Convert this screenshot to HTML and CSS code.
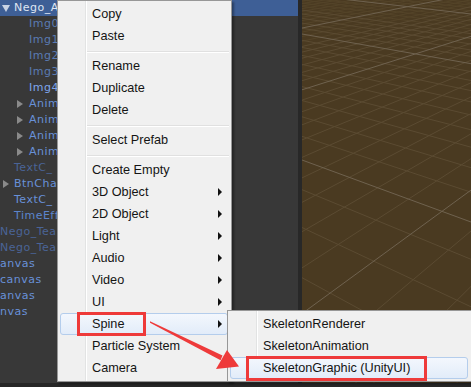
FILE: index.html
```html
<!DOCTYPE html>
<html lang="en">
<head>
  <meta charset="UTF-8" />
  <title>Hierarchy context menu</title>
  <link rel="stylesheet" href="styles.css">
</head>
<body>
  <div class="editor">
    <!-- hierarchy panel, names cut where the menu covers them -->
    <div class="hierarchy">
      <div class="row l1 selected"><span class="fold"><svg width="8" height="7" viewBox="0 0 8 7"><path d="M0 0H8L4 7Z" fill="#c9d3e4"/></svg></span>Nego_A</div>
      <div class="row l2 muted"><span class="fold"></span>Img0</div>
      <div class="row l2 muted"><span class="fold"></span>Img1</div>
      <div class="row l2 muted"><span class="fold"></span>Img2</div>
      <div class="row l2 muted"><span class="fold"></span>Img3</div>
      <div class="row l2 bright"><span class="fold"></span>Img4</div>
      <div class="row l2 active"><span class="fold"><svg width="6" height="8" viewBox="0 0 6 8"><path d="M0 0L6 4L0 8Z" fill="#8a8a8a"/></svg></span>Anim</div>
      <div class="row l2 active"><span class="fold"><svg width="6" height="8" viewBox="0 0 6 8"><path d="M0 0L6 4L0 8Z" fill="#8a8a8a"/></svg></span>Anim</div>
      <div class="row l2 active"><span class="fold"><svg width="6" height="8" viewBox="0 0 6 8"><path d="M0 0L6 4L0 8Z" fill="#8a8a8a"/></svg></span>Anim</div>
      <div class="row l2 active"><span class="fold"><svg width="6" height="8" viewBox="0 0 6 8"><path d="M0 0L6 4L0 8Z" fill="#8a8a8a"/></svg></span>Anim</div>
      <div class="row l1 dim"><span class="fold"></span>TextC_</div>
      <div class="row l1 active"><span class="fold"><svg width="6" height="8" viewBox="0 0 6 8"><path d="M0 0L6 4L0 8Z" fill="#8a8a8a"/></svg></span>BtnCha</div>
      <div class="row l1 active"><span class="fold"></span>TextC_</div>
      <div class="row l1 mid"><span class="fold"></span>TimeEff</div>
      <div class="row l0 dim">Nego_Tea</div>
      <div class="row l0 dim">Nego_Tea</div>
      <div class="row l0 active">anvas</div>
      <div class="row l0 active">canvas</div>
      <div class="row l0 active">anvas</div>
      <div class="row l0 active">nvas</div>
    </div>
    <div class="divider"></div>
    <!-- scene view with ground grid -->
    <div class="scene">
      <svg class="grid" width="169" height="383" viewBox="0 0 169 383">
        <path class="grid-far" d="M0 -16.7L169 0M0 -14.8L169 2.4M0 -12.7L169 5M0 -10.5L169 7.8M0 -8.1L169 10.8M0 -2.9L169 17.4M0 0L169 21M0 3.1L169 24.9M0 6.4L169 29M0 1.2L169 -24.5M0 3.5L169 -23M0 6L169 -21.2M0 8.6L169 -19.4M0 11.3L169 -17.6M0 14.2L169 -15.6M0 17.3L169 -13.5M0 20.6L169 -11.2M0 24.2L169 -8.7M0 32.1L169 -3.3M0 36.5L169 -0.3M0 41.3L169 3"/>
        <path class="grid-dim" d="M0 10.1L169 33.7M0 14L169 38.6M0 18.3L169 44M0 23.1L169 50M0 28.2L169 56.4M0 40.3L169 71.6M0 47.4L169 80.5M0 55.4L169 90.6M0 64.4L169 101.9M0 74.8L169 115M0 86.6L169 129.8M0 100.5L169 147.2M0 116.8L169 167.7M0 136.3L169 192.2M0 189.7L169 259.3M0 227.5L169 306.8M0 277.7L169 369.8M0 347.3L169 457.2M0 46.5L169 6.6M0 52.1L169 10.4M0 58.2L169 14.6M0 65L169 19.3M0 72.4L169 24.4M0 80.7L169 30.1M0 100.1L169 43.4M0 111.7L169 51.4M0 124.8L169 60.4M0 139.9L169 70.8M0 157.4L169 82.8M0 177.9L169 96.9M0 202.3L169 113.6M0 231.7L169 133.8M0 267.9L169 158.7M0 373.1L169 231M0 453.8L169 286.4M0 569.2L169 365.7"/>
        <path class="grid-main" d="M0 -5.6L169 14M0 34L169 63.7M0 160L169 222M0 28L169 -6.1M0 89.8L169 36.3M0 313.6L169 190.1"/>
      </svg>
    </div>
  </div>
  <div class="statusbar"></div>

  <!-- context menu -->
  <div class="menu">
    <div class="item">Copy</div>
    <div class="item">Paste</div>
    <div class="sep"></div>
    <div class="item">Rename</div>
    <div class="item">Duplicate</div>
    <div class="item">Delete</div>
    <div class="sep"></div>
    <div class="item">Select Prefab</div>
    <div class="sep"></div>
    <div class="item">Create Empty</div>
    <div class="item">3D Object<span class="arrow"></span></div>
    <div class="item">2D Object<span class="arrow"></span></div>
    <div class="item">Light<span class="arrow"></span></div>
    <div class="item">Audio<span class="arrow"></span></div>
    <div class="item">Video<span class="arrow"></span></div>
    <div class="item">UI<span class="arrow"></span></div>
    <div class="item hover">Spine<span class="arrow"></span></div>
    <div class="item">Particle System</div>
    <div class="item">Camera</div>
  </div>

  <div class="menu submenu">
    <div class="item">SkeletonRenderer</div>
    <div class="item">SkeletonAnimation</div>
    <div class="item hover">SkeletonGraphic (UnityUI)</div>
  </div>

  <!-- annotations -->
  <div class="mark mark-spine"></div>
  <div class="mark mark-graphic"></div>
  <svg class="pointer" width="471" height="387" viewBox="0 0 471 387">
    <path d="M150 321.3L222.5 355.6L220.6 360.2L150 322.8Z" fill="#ee3a3a"/>
    <path d="M239 366.5L216 369L227 350Z" fill="#ee3a3a"/>
  </svg>
</body>
</html>
```

FILE: styles.css
```css
:root {
  --panel: #383838;
  --select: #3e5f96;
  --menu-bg: #f0f0f0;
  --menu-border: #979797;
  --red: #ee3a3a;
}

body {
  margin: 0;
  width: 471px;
  height: 387px;
  overflow: hidden;
  background: #262626;
  position: relative;
}

.editor {
  display: flex;
  height: 383px;
}

.statusbar {
  height: 4px;
  background: #262626;
}

/* hierarchy */
.hierarchy {
  width: 298px;
  background: var(--panel);
  font-family: "DejaVu Sans", sans-serif;
  font-size: 11px;
  letter-spacing: 0.5px;
  overflow: hidden;
}

.row {
  height: 16px;
  line-height: 16px;
  white-space: nowrap;
  display: flex;
  align-items: center;
}

.row.l0 { padding-left: 0; }
.row.l1 { padding-left: 0; }
.row.l2 { padding-left: 15px; }

.fold {
  width: 14px;
  height: 16px;
  display: inline-flex;
  align-items: center;
  padding-left: 2px;
  box-sizing: border-box;
  flex: none;
}

.row.l1 .fold { padding-left: 3px; }
.row.l2 .fold { padding-left: 2px; }
.row.selected .fold { padding-left: 2px; }

.selected {
  background: var(--select);
  color: #dfe6f2;
}

.muted { color: #5a7bb3; }
.bright { color: #7ea6ec; }
.active { color: #6891d8; }
.mid { color: #5c85cc; }
.dim { color: #4a6497; }

.divider {
  width: 4px;
  background: #282828;
}

.scene {
  flex: 1;
  background: #4a3a21;
  overflow: hidden;
}

.grid {
  display: block;
}

.grid path {
  fill: none;
  stroke-width: 1;
}

.grid-far { stroke: #544429; }
.grid-dim { stroke: #5b4b32; }
.grid-main { stroke: #6f624f; }

/* context menu */
.menu {
  position: absolute;
  left: 57px;
  top: 0;
  width: 175px;
  box-sizing: border-box;
  border: 1px solid var(--menu-border);
  padding: 2px 3px 2px 2px;
  background: linear-gradient(to right,
    var(--menu-bg) 0 27px,
    #e2e3e3 27px 28px,
    #ffffff 28px 29px,
    var(--menu-bg) 29px);
  box-shadow: 2px 2px 2px rgba(0, 0, 0, 0.35);
  font-family: "Liberation Sans", Arial, sans-serif;
  font-size: 12.7px;
  color: #141414;
}

.item {
  height: 22px;
  display: flex;
  align-items: center;
  padding: 0 5px 0 31px;
  box-sizing: border-box;
  border: 1px solid transparent;
  border-radius: 3px;
}

.item.hover {
  border-color: #b4cdec;
  background: linear-gradient(#f3f7fd, #e2ecf9);
}

.arrow {
  margin-left: auto;
  width: 0;
  height: 0;
  border-left: 4px solid #111;
  border-top: 4px solid transparent;
  border-bottom: 4px solid transparent;
}

.sep {
  margin: 4px -1px 2px 27px;
  border-top: 1px solid #e0e0e0;
  border-bottom: 1px solid #ffffff;
}

.submenu {
  left: 227px;
  top: 310px;
  width: 246px;
  padding: 2px 4px 2px 2px;
  background: linear-gradient(to right,
    var(--menu-bg) 0 28px,
    #e2e3e3 28px 29px,
    #ffffff 29px 30px,
    var(--menu-bg) 30px);
}

.submenu .item {
  padding-left: 32px;
}

/* red annotations */
.mark {
  position: absolute;
  box-sizing: border-box;
  border: 3px solid var(--red);
}

.mark-spine {
  left: 77px;
  top: 312px;
  width: 69px;
  height: 24px;
}

.mark-graphic {
  left: 246px;
  top: 356px;
  width: 181px;
  height: 25px;
}

.pointer {
  position: absolute;
  left: 0;
  top: 0;
  pointer-events: none;
}
```
